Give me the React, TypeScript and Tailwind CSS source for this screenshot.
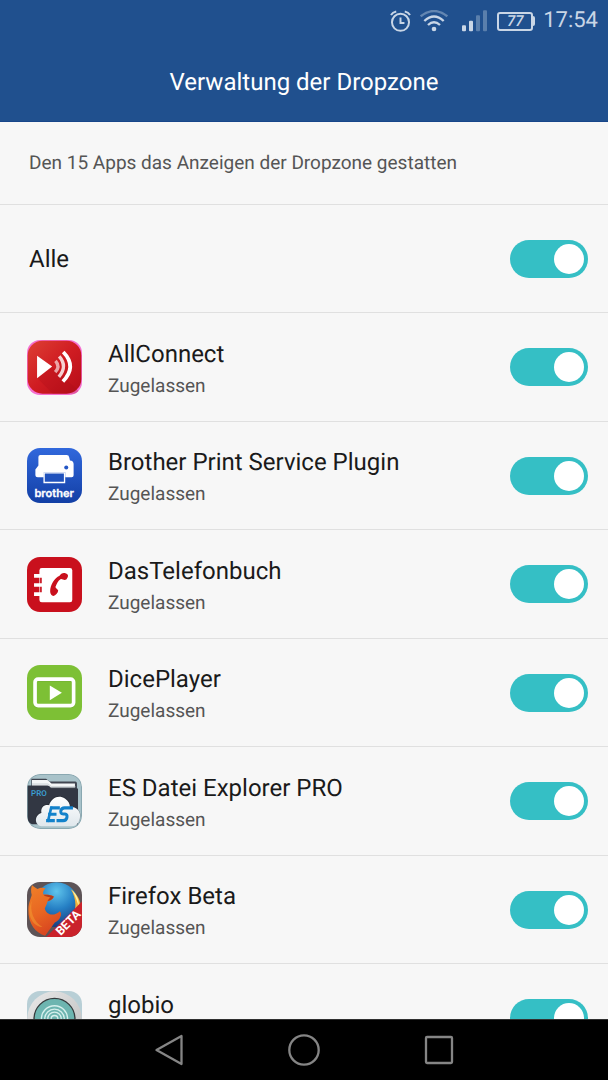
import { useState, type ReactNode } from "react"

function AppIcon({ children }: { children: ReactNode }) {
  return (
    <svg viewBox="21 24 164 164" className="size-[55px] shrink-0 overflow-hidden rounded-[13px]" aria-hidden="true">
      {children}
    </svg>
  )
}

function AllConnectIcon() {
  return (
    <AppIcon>
      <defs>
        <linearGradient id="ac-red" x1="0" y1="0" x2="1" y2="1">
          <stop offset="0" stopColor="#dd4034" />
          <stop offset="0.5" stopColor="#d01c22" />
          <stop offset="1" stopColor="#b50d18" />
        </linearGradient>
      </defs>
      <rect x="21" y="24" width="164" height="164" fill="#f56fd0" />
      <rect x="23" y="26" width="160" height="158" rx="44" fill="url(#ac-red)" />
      <path d="M52 138 96 104 184 184H98Z" fill="#a80c16" opacity="0.25" />
      <path d="M51 71 96 103 51 138Z" fill="#fff" />
      <g fill="none" stroke="#fff">
        <path d="M106 86Q121 103 105 120" strokeWidth="10" opacity="0.6" />
        <path d="M117 73Q143 103 116 134" strokeWidth="10" opacity="0.8" />
        <path d="M129 60Q171 103 128 148" strokeWidth="11" />
      </g>
    </AppIcon>
  )
}

function BrotherIcon() {
  return (
    <AppIcon>
      <defs>
        <linearGradient id="br-blue" x1="0" y1="0" x2="0" y2="1">
          <stop offset="0" stopColor="#3168dc" />
          <stop offset="1" stopColor="#123fa5" />
        </linearGradient>
      </defs>
      <rect x="21" y="24" width="164" height="164" fill="url(#br-blue)" />
      <path
        d="M61 45H139Q146 45 147 52L149 61Q160 62 160 72V105Q160 111 154 111H135V96H71V111H53Q46 111 46 105V88L55 76V51Q55 45 61 45Z"
        fill="#fff"
      />
      <circle cx="138" cy="82" r="6" fill="#2356c5" />
      <path d="M72 98H133V127H72Z" fill="#2052bd" stroke="#fff" strokeWidth="4" />
      <text
        x="102"
        y="171"
        textAnchor="middle"
        fill="#fff"
        stroke="#fff"
        strokeWidth="1"
        className="font-[Inter,sans-serif] text-[33px] font-semibold"
      >
        brother
      </text>
    </AppIcon>
  )
}

function PhoneBookIcon() {
  return (
    <AppIcon>
      <rect x="21" y="24" width="164" height="164" fill="#c9101d" />
      <rect x="58" y="57" width="98" height="102" rx="7" fill="#fff" />
      <path d="M42 75H60V86H42ZM42 102H60V113H42ZM42 129H60V140H42Z" fill="#fff" />
      <path d="M60 86H65V102H60ZM60 113H65V129H60Z" fill="#c9101d" />
      <path
        d="M118 80C121 75 127 71 133 72C140 73 145 77 143 82C142 86 139 91 136 92C131 94 125 88 121 90C114 94 109 104 106 113C105 118 114 120 114 125C113 132 106 139 100 140C94 140 90 133 90 126C90 108 103 87 118 80Z"
        fill="#c9101d"
      />
    </AppIcon>
  )
}

function DicePlayerIcon() {
  return (
    <AppIcon>
      <rect x="21" y="24" width="164" height="164" fill="#7dc035" />
      <rect x="45" y="68" width="115" height="79" rx="9" fill="none" stroke="#67a52b" strokeWidth="11" opacity="0.6" />
      <rect x="45" y="66" width="115" height="79" rx="9" fill="none" stroke="#fff" strokeWidth="11" />
      <path d="M89 85 125 107 89 129Z" fill="#fff" />
    </AppIcon>
  )
}

function EsExplorerIcon() {
  return (
    <AppIcon>
      <defs>
        <linearGradient id="es-cloud" x1="0" y1="0" x2="0" y2="1">
          <stop offset="0" stopColor="#fff" />
          <stop offset="1" stopColor="#dfe7ec" />
        </linearGradient>
      </defs>
      <rect x="21" y="24" width="164" height="164" rx="39" fill="#8aa8b1" />
      <rect x="24" y="27" width="158" height="158" rx="36" fill="#a9c3ca" />
      <path d="M34 38H78L88 46H165Q170 46 170 52V70H34Z" fill="#414651" />
      <path d="M36 42H82L94 52H164V64H36Z" fill="#f4f6f7" />
      <path d="M36 54H84L94 62H166" fill="none" stroke="#b5bec4" strokeWidth="2" />
      <path d="M23 58H82Q88 58 91 64L93 67H173V174H36Q23 169 23 154Z" fill="#323743" />
      <text x="33" y="91" fill="#3ba3d9" className="font-[Roboto,sans-serif] text-2xl font-medium">
        PRO
      </text>
      <path
        d="M67 177C43 177 38 145 62 137C60 119 75 111 85 114C93 90 117 82 136 95C147 103 150 112 150 121C165 119 177 128 180 143C182 162 172 177 154 177Z"
        fill="#20252e"
        opacity="0.4"
      />
      <path
        d="M69 180C43 180 40 148 64 140C61 121 75 114 87 117C94 93 117 85 134 97C145 104 149 113 149 123C165 121 176 130 179 144C181 164 171 180 154 180Z"
        fill="url(#es-cloud)"
      />
      <g fill="none" stroke="#1382cb" strokeWidth="9">
        <path d="M91 125H119M84 144H109M78 163H104" />
        <path d="M94 121 83 167" strokeWidth="8" />
        <path d="M158 125H133Q124 125 122 133Q120 143 129 143H134Q142 144 140 154Q138 163 129 163H109" />
      </g>
    </AppIcon>
  )
}

function FirefoxBetaIcon() {
  return (
    <AppIcon>
      <defs>
        <radialGradient id="ff-globe" cx="0.5" cy="0.2" r="0.8">
          <stop offset="0" stopColor="#5fc4ec" />
          <stop offset="0.5" stopColor="#257fc4" />
          <stop offset="1" stopColor="#173c7d" />
        </radialGradient>
        <linearGradient id="ff-fur" x1="0" y1="0" x2="0.4" y2="1">
          <stop offset="0" stopColor="#ef8128" />
          <stop offset="0.6" stopColor="#e86522" />
          <stop offset="1" stopColor="#d94720" />
        </linearGradient>
      </defs>
      <rect x="21" y="24" width="164" height="164" fill="#5d5356" />
      <circle cx="109" cy="92" r="67" fill="url(#ff-globe)" />
      <path d="M151 45C179 66 187 95 178 122L163 110C169 88 163 63 151 45Z" fill="#f3b33b" />
      <path d="M155 48C172 64 177 82 175 96C170 80 165 66 155 48Z" fill="#fff1a3" />
      <path
        d="M36 34C43 40 48 43 52 45C61 40 69 40 76 43C70 49 67 56 70 61C80 61 94 62 101 67C99 75 91 79 82 82C80 90 77 96 74 103C78 122 101 128 119 111C128 120 119 137 104 145L75 184C48 176 24 150 25 105C26 84 33 73 35 63C32 52 33 41 36 34Z"
        fill="url(#ff-fur)"
      />
      <path d="M70 62C80 61 94 62 101 67C99 75 91 79 82 81C85 76 87 73 91 70C83 68 75 68 70 62Z" fill="#b43c1b" />
      <path d="M36 79C28 109 41 143 67 158C53 160 34 146 29 122C26 104 30 90 36 79Z" fill="#f39a31" opacity="0.55" />
      <path d="M185 82V188H78Z" fill="#ca222b" />
      <text
        x="144"
        y="157"
        textAnchor="middle"
        fill="#fff"
        transform="rotate(-45 144 145)"
        className="font-[Roboto,sans-serif] text-[36px] font-bold"
      >
        BETA
      </text>
    </AppIcon>
  )
}

function GlobioIcon() {
  return (
    <AppIcon>
      <defs>
        <linearGradient id="gl-ring" x1="0" y1="0" x2="1" y2="1">
          <stop offset="0" stopColor="#e9e9e9" />
          <stop offset="1" stopColor="#bdbdbd" />
        </linearGradient>
      </defs>
      <rect x="21" y="24" width="164" height="164" fill="#b8cfd6" />
      <circle cx="103" cy="106" r="81" fill="url(#gl-ring)" />
      <circle cx="103" cy="107" r="61" fill="#6db5b0" stroke="#353b3d" strokeWidth="4" />
      <g fill="none" stroke="#d5efec" strokeWidth="4">
        <circle cx="103" cy="107" r="39" />
        <circle cx="103" cy="107" r="29" />
        <circle cx="103" cy="107" r="20" />
        <circle cx="103" cy="107" r="10" />
      </g>
    </AppIcon>
  )
}

const apps = [
  { name: "AllConnect", icon: AllConnectIcon },
  { name: "Brother Print Service Plugin", icon: BrotherIcon },
  { name: "DasTelefonbuch", icon: PhoneBookIcon },
  { name: "DicePlayer", icon: DicePlayerIcon },
  { name: "ES Datei Explorer PRO", icon: EsExplorerIcon },
  { name: "Firefox Beta", icon: FirefoxBetaIcon },
  { name: "globio", icon: GlobioIcon },
]

function Switch({ id, checked, onChange }: { id: string; checked: boolean; onChange: () => void }) {
  return (
    <input
      id={id}
      type="checkbox"
      role="switch"
      checked={checked}
      onChange={onChange}
      className="flex h-[38px] w-[78px] shrink-0 appearance-none items-center rounded-full bg-gray-300 px-1 before:size-[30px] before:rounded-full before:bg-white checked:justify-end checked:bg-[#35bfc5]"
    />
  )
}

function StatusBar() {
  return (
    <div className="flex h-[42px] items-center justify-end pr-[10px] text-[#c9d6e6]">
      <svg viewBox="0 0 64 66" className="mr-[9px] h-[22px] w-[21px]" fill="none" stroke="currentColor" strokeWidth="6" aria-label="Wecker">
        <circle cx="32" cy="37" r="26" />
        <path d="M32 22V39H44M3 15Q8 6 19 4M61 15Q56 6 45 4" />
      </svg>
      <svg viewBox="0 0 84 66" className="mr-[14px] h-[22px] w-[28px]" fill="none" stroke="currentColor" strokeWidth="7" aria-label="WLAN">
        <path d="M2 19Q42-13 82 19" opacity="0.4" />
        <path d="M13 33Q42 6 71 33M24 45Q42 28 60 45" />
        <circle cx="42" cy="57" r="7" fill="currentColor" stroke="none" />
      </svg>
      <svg viewBox="0 0 75 66" className="mr-[10px] h-[22px] w-[25px]" fill="currentColor" aria-label="Mobilfunk">
        <rect x="0" y="46" width="12" height="18" rx="3" />
        <rect x="21" y="32" width="12" height="32" rx="3" />
        <rect x="42" y="16" width="12" height="48" rx="3" opacity="0.35" />
        <rect x="63" y="1" width="12" height="63" rx="3" opacity="0.35" />
      </svg>
      <div className="mr-2 flex items-center">
        <span className="flex h-[19px] w-9 items-center justify-center rounded-[3px] border-2 border-current text-[15px] font-medium italic">
          77
        </span>
        <span className="h-[10px] w-[2px] rounded-r-sm bg-current" />
      </div>
      <span className="text-[22px] leading-7">17:54</span>
    </div>
  )
}

function NavigationBar() {
  return (
    <nav className="flex h-[61px] shrink-0 items-center justify-center gap-[99px] border-t border-[#303030] bg-black text-[#858585]">
      <button type="button" aria-label="Zurück">
        <svg viewBox="0 0 36 36" className="size-9" fill="none" stroke="currentColor" strokeWidth="2.3" strokeLinejoin="round">
          <path d="M5.500 18 30.500 4V32Z" />
        </svg>
      </button>
      <button type="button" aria-label="Startbildschirm">
        <svg viewBox="0 0 36 36" className="size-9" fill="none" stroke="currentColor" strokeWidth="2.3">
          <circle cx="18" cy="18" r="14.700" />
        </svg>
      </button>
      <button type="button" aria-label="Letzte Apps">
        <svg viewBox="0 0 36 36" className="size-9" fill="none" stroke="currentColor" strokeWidth="2.3" strokeLinejoin="round">
          <rect x="5" y="5" width="26" height="26" rx="1" />
        </svg>
      </button>
    </nav>
  )
}

export default function App() {
  const [allowed, setAllowed] = useState(apps.map(() => true))
  const allAllowed = allowed.every(Boolean)

  const toggle = (index: number) => setAllowed(allowed.map((value, i) => (i === index ? !value : value)))

  return (
    <div className="flex h-screen flex-col bg-[#f7f7f7] font-[Roboto,sans-serif] text-[#1a1a1a] [text-rendering:geometricPrecision]">
      <header className="shrink-0 border-b border-[#17468a] bg-[#20508e]">
        <StatusBar />
        <h1 className="flex h-[79px] items-center justify-center text-2xl text-white">Verwaltung der Dropzone</h1>
      </header>

      <main className="min-h-0 flex-1 overflow-hidden">
        <p className="flex h-[83px] items-center border-b border-[#e0e0e0] px-[29px] text-[19px] text-[#555]">
          Den 15 Apps das Anzeigen der Dropzone gestatten
        </p>

        <div className="flex h-[108px] items-center justify-between border-b border-[#e0e0e0] pr-5 pl-[29px]">
          <label htmlFor="all" className="text-2xl">
            Alle
          </label>
          <Switch id="all" checked={allAllowed} onChange={() => setAllowed(apps.map(() => !allAllowed))} />
        </div>

        <ul>
          {apps.map((app, i) => (
            <li
              key={app.name}
              className="flex items-center border-b border-[#e0e0e0] pr-5 pl-[27px] odd:h-[109px] even:h-[108px]"
            >
              <app.icon />
              <label htmlFor={`app-${i}`} className="ml-[26px] flex-1 pt-[5px]">
                <span className="block text-2xl">{app.name}</span>
                <span className="block text-[19px] leading-8 text-[#555]">
                  {allowed[i] ? "Zugelassen" : "Nicht zugelassen"}
                </span>
              </label>
              <Switch id={`app-${i}`} checked={allowed[i]} onChange={() => toggle(i)} />
            </li>
          ))}
        </ul>
      </main>

      <NavigationBar />
    </div>
  )
}
